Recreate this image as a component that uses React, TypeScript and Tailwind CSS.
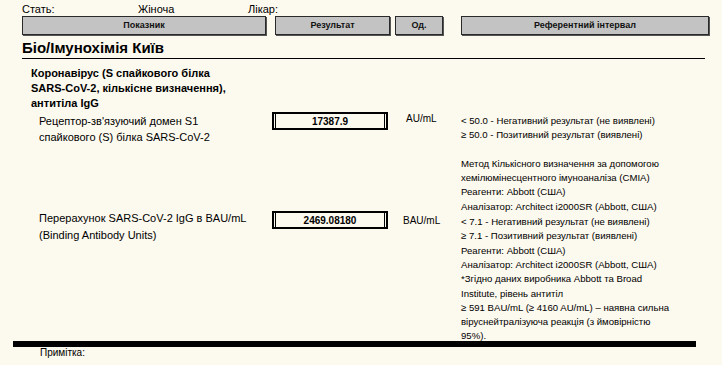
export default function App() {
  const font = { fontFamily: '"Liberation Sans", Arial, sans-serif' };

  const headerBox = 'h-[19px] flex items-center justify-center bg-[#c3c3c3] border border-[#2a2a2a] shadow-[1px_1px_0_#555] text-[9px] font-bold text-[#111]';

  return (
    <div className="w-[722px] h-[365px] overflow-hidden bg-[#fcf9ee] text-black" style={font}>
      {/* patient row */}
      <div className="flex h-[15px] items-end pl-[22px] text-[11px] leading-[12px]">
        <span className="w-[116px]">Стать:</span>
        <span className="w-[110px]">Жіноча</span>
        <span>Лікар:</span>
      </div>

      {/* table header */}
      <div className="flex pl-[22px] mt-[1px]">
        <div className={`${headerBox} w-[244px]`}>Показник</div>
        <div className={`${headerBox} w-[115px] ml-[9px]`}>Результат</div>
        <div className={`${headerBox} w-[48px] ml-[5px]`}>Од.</div>
        <div className={`${headerBox} w-[248px] ml-[18px]`}>Референтний інтервал</div>
      </div>

      {/* section title */}
      <div className="ml-[22px] w-[683px] mt-[4px] border-b border-black text-[15px] font-bold leading-[18px] pb-[1px]">
        Біо/Імунохімія Київ
      </div>

      {/* group */}
      <div className="pl-[31px] mt-[7px] text-[11px] font-bold leading-[15px]">
        Коронавірус (S спайкового білка
        <br />
        SARS-CoV-2, кількісне визначення),
        <br />
        антитіла IgG
      </div>

      {/* row 1 */}
      <div className="flex pl-[22px]">
        <div className="w-[250px] pl-[17px] pt-[2px] text-[11px] leading-[16px]">
          Рецептор-зв'язуючий домен S1
          <br />
          спайкового (S) білка SARS-CoV-2
        </div>
        <div className="pt-[1px]">
          <ResultBox value="17387.9" />
        </div>
        <div className="w-[73px] pl-[18px] text-[10px] leading-[14px] pt-[1px]">AU/mL</div>
        <div className="text-[9.6px] leading-[14.3px] pt-[3px]">
          <div>&lt; 50.0 - Негативний результат (не виявлені)</div>
          <div>≥ 50.0 - Позитивний результат (виявлені)</div>
          <div className="h-[14.3px]" />
          <div>Метод Кількісного визначення за допомогою</div>
          <div>хемілюмінесцентного імуноаналіза (CMIA)</div>
          <div>Реагенти: Abbott (США)</div>
          <div>Аналізатор: Architect i2000SR (Abbott, США)</div>
        </div>
      </div>

      {/* row 2 */}
      <div className="flex pl-[22px]">
        <div className="w-[250px] pl-[17px] mt-[-4px] text-[11px] leading-[17px]">
          Перерахунок SARS-CoV-2 IgG в BAU/mL
          <br />
          (Binding Antibody Units)
        </div>
        <div className="mt-[-3px]">
          <ResultBox value="2469.08180" />
        </div>
        <div className="w-[73px] pl-[15px] text-[10px] leading-[14px] pt-[0px]">BAU/mL</div>
        <div className="text-[9.6px] leading-[14.3px] pt-[1px]">
          <div>&lt; 7.1 - Негативний результат (не виявлені)</div>
          <div>≥ 7.1 - Позитивний результат (виявлені)</div>
          <div>Реагенти: Abbott (США)</div>
          <div>Аналізатор: Architect i2000SR (Abbott, США)</div>
          <div>*Згідно даних виробника Abbott та Broad</div>
          <div>Institute, рівень антитіл</div>
          <div>≥ 591 BAU/mL (≥ 4160 AU/mL) – наявна сильна</div>
          <div>віруснейтралізуюча реакція (з ймовірністю</div>
          <div>95%).</div>
        </div>
      </div>

      {/* footer */}
      <div className="ml-[13px] w-[683px] h-[6px] bg-black mt-[-3px]" />
      <div className="pl-[40px] text-[10px] leading-[12px]">Примітка:</div>
    </div>
  );
}

function ResultBox({ value }: { value: string }) {
  return (
    <div className="w-[116px] h-[18px] border-2 border-black flex">
      <div className="flex-1 mx-[1px] border-x border-black flex items-center justify-center text-[10px] font-bold">
        {value}
      </div>
    </div>
  );
}
